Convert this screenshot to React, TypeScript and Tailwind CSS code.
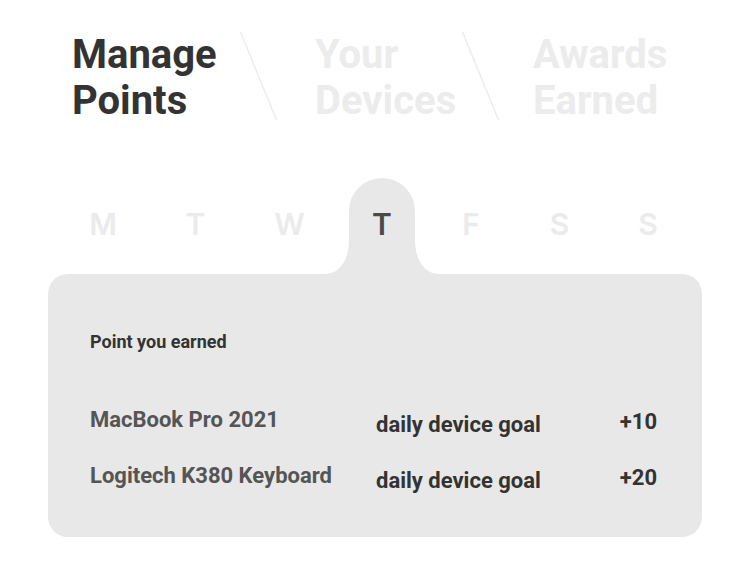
const days = [
  { d: "M", w: "w-[92px]" },
  { d: "T", w: "w-[93px]" },
  { d: "W", w: "w-[95px]" },
  { d: "T", w: "w-[90px]", active: true },
  { d: "F", w: "w-[88px]" },
  { d: "S", w: "w-[89px]" },
  { d: "S", w: "w-[88px]" },
];

const rows = [
  { name: "MacBook Pro 2021", goal: "daily device goal", pts: "+10" },
  { name: "Logitech K380 Keyboard", goal: "daily device goal", pts: "+20" },
];

function Slash() {
  return (
    <svg width="37" height="88" viewBox="0 0 37 88" className="shrink-0">
      <line x1="0.5" y1="0" x2="36.5" y2="88" stroke="#ececec" strokeWidth="1.5" />
    </svg>
  );
}

export default function App() {
  return (
    <div className="h-[572px] w-[750px] overflow-hidden bg-white font-['Roboto',sans-serif]">
      {/* Header tabs */}
      <div className="flex items-start pl-[72px] pt-[32px]">
        <h1 className="w-[168px] shrink-0 text-[40px] font-bold leading-[46px] text-[#333333]">
          Manage
          <br />
          Points
        </h1>
        <Slash />
        <div className="ml-[38px] w-[147px] shrink-0 text-[40px] font-bold leading-[46px] text-[#ececec]">
          Your
          <br />
          Devices
        </div>
        <Slash />
        <div className="ml-[34px] shrink-0 text-[40px] font-bold leading-[46px] text-[#ececec]">
          Awards
          <br />
          Earned
        </div>
      </div>

      {/* Week days */}
      <div className="mt-[54px] flex h-[96px] pl-[57px]">
        {days.map((day, i) => (
          <div key={i} className={`relative flex justify-center ${day.w}`}>
            {day.active && (
              <div className="absolute top-0 left-1/2 h-full w-[66px] -translate-x-1/2">
                <div className="h-full w-full rounded-t-[33px] bg-[#e8e8e8]" />
                <div className="absolute bottom-0 left-[-22px] h-[31px] w-[22px] bg-[radial-gradient(22px_31px_at_0_0,transparent_97%,#e8e8e8_100%)]" />
                <div className="absolute right-[-22px] bottom-0 h-[31px] w-[22px] bg-[radial-gradient(22px_31px_at_100%_0,transparent_97%,#e8e8e8_100%)]" />
              </div>
            )}
            <span
              className={`relative pt-[30px] font-['Inter',sans-serif] text-[30px] leading-[32px] font-semibold ${
                day.active ? "text-[#4a4a4a]" : "text-[#ebebeb]"
              }`}
            >
              {day.d}
            </span>
          </div>
        ))}
      </div>

      {/* Points card */}
      <div className="ml-[48px] h-[263px] w-[654px] rounded-[20px] bg-[#e8e8e8] px-[42px] pt-[57px]">
        <p className="text-[18px] leading-[22px] font-bold text-[#333333]">Point you earned</p>
        <div className="mt-[54px] flex flex-col gap-[25px]">
          {rows.map((r) => (
            <div key={r.name} className="flex items-start">
              <span className="w-[286px] text-[22px] leading-[26px] font-bold text-[#555555]">{r.name}</span>
              <span className="mt-[5px] text-[22px] leading-[26px] font-bold text-[#333333]">{r.goal}</span>
              <span className="mt-[2px] ml-auto pr-[3px] text-[22px] leading-[26px] font-bold text-[#333333]">
                {r.pts}
              </span>
            </div>
          ))}
        </div>
      </div>
    </div>
  );
}
